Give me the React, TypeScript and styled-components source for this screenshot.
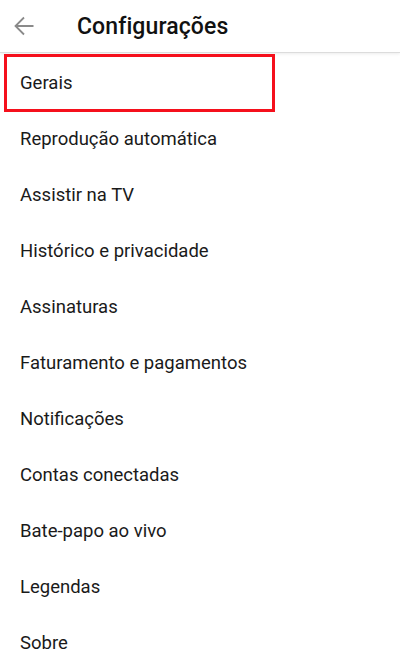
import styled, { createGlobalStyle } from "styled-components";

const items = [
  "Gerais",
  "Reprodução automática",
  "Assistir na TV",
  "Histórico e privacidade",
  "Assinaturas",
  "Faturamento e pagamentos",
  "Notificações",
  "Contas conectadas",
  "Bate-papo ao vivo",
  "Legendas",
  "Sobre",
];

const GlobalStyle = createGlobalStyle`
  html, body {
    margin: 0;
    padding: 0;
    background: #fff;
    font-family: Roboto, "Liberation Sans", sans-serif;
  }
`;

export default function App() {
  return (
    <>
      <GlobalStyle />
      <Page>
        <Header>
          <BackButton aria-label="Voltar">
            <svg width="22" height="22" viewBox="0 0 22 22">
              <path
                d="M20.5 11H2.5M11 2.5L2.5 11L11 19.5"
                fill="none"
                stroke="#8a8a8a"
                strokeWidth="1.8"
              />
            </svg>
          </BackButton>
          <Title>Configurações</Title>
        </Header>
        <List>
          {items.map((label, i) => (
            <Item key={label} $highlighted={i === 0}>
              {label}
            </Item>
          ))}
        </List>
      </Page>
    </>
  );
}

const Page = styled.div`
  width: 400px;
  height: 655px;
  overflow: hidden;
  background: #fff;
`;

const Header = styled.div`
  height: 52px;
  display: flex;
  align-items: center;
  border-bottom: 1px solid #dcdcdc;
  box-shadow: 0 1px 3px rgba(0, 0, 0, 0.08);
  position: relative;
  z-index: 1;
`;

const BackButton = styled.button`
  width: 22px;
  height: 22px;
  margin-left: 13px;
  border: none;
  background: none;
  padding: 0;
  display: flex;
  align-items: center;
  justify-content: center;
`;

const Title = styled.h1`
  margin: 0 0 0 42px;
  font-size: 23px;
  font-weight: 500;
  color: #111;
  letter-spacing: 0.1px;
`;

const List = styled.div`
  display: flex;
  flex-direction: column;
  padding-top: 1px;
`;

const Item = styled.div<{ $highlighted?: boolean }>`
  position: relative;
  height: 56px;
  display: flex;
  align-items: center;
  padding-left: 20px;
  padding-top: 1px;
  box-sizing: border-box;
  font-size: 18.5px;
  color: #1a1a1a;

  ${(p) =>
    p.$highlighted &&
    `
    &::after {
      content: "";
      position: absolute;
      left: 4px;
      top: 0;
      width: 271px;
      height: 58px;
      border: 3px solid #f5101c;
      box-sizing: border-box;
      z-index: 2;
    }
  `}
`;
